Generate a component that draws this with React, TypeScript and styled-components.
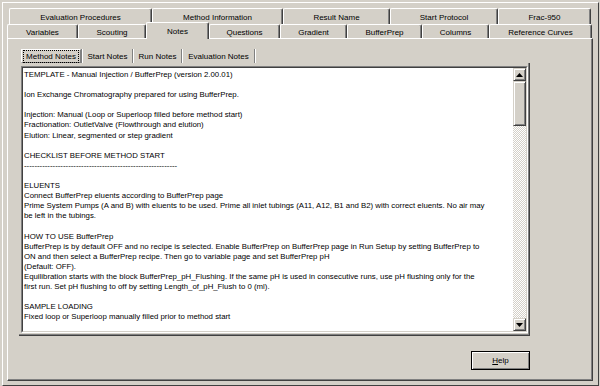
import React from "react";
import styled, { createGlobalStyle } from "styled-components";

const FACE = "#d4d0c8";
const LIGHT = "#ffffff";
const SHADOW = "#808080";
const DARK = "#404040";

const GlobalStyle = createGlobalStyle`
  html, body { margin: 0; padding: 0; background: ${FACE}; }
  body { font-family: "Liberation Sans", Arial, sans-serif; }
`;

const Window = styled.div`
  width: 600px;
  height: 386px;
  box-sizing: border-box;
  padding: 2px 1px 0 2px;
  background: ${FACE};
  display: flex;
  font-family: "Liberation Sans", Arial, sans-serif;
  font-size: 8px;
  color: #000;
`;

const Frame = styled.div`
  flex: 1;
  display: flex;
  flex-direction: column;
  border-top: 1px solid ${LIGHT};
  border-left: 1px solid ${LIGHT};
  border-right: 1px solid ${DARK};
  border-bottom: 1px solid ${DARK};
  padding: 5px 5px 4px 4px;
`;

const TabRow = styled.div<{ $indent: number; $overlap: number }>`
  display: flex;
  align-items: flex-end;
  height: 16px;
  margin-left: ${(p) => p.$indent}px;
  margin-top: ${(p) => -p.$overlap}px;
`;

const Tab = styled.div<{ $w: number; $h: number; $active?: boolean }>`
  box-sizing: border-box;
  width: ${(p) => p.$w}px;
  height: ${(p) => p.$h}px;
  background: ${FACE};
  border-top: 1px solid ${LIGHT};
  border-left: 1px solid ${LIGHT};
  border-right: 1px solid ${DARK};
  box-shadow: inset -1px 0 0 ${SHADOW};
  border-top-left-radius: 2px;
  border-top-right-radius: 2px;
  display: flex;
  align-items: center;
  justify-content: center;
  white-space: nowrap;
  position: relative;
  z-index: ${(p) => (p.$active ? 2 : 1)};
  margin-bottom: ${(p) => (p.$active ? -1 : 0)}px;
  padding-top: ${(p) => (p.$active ? 0 : 1)}px;
`;

const Panel = styled.div`
  flex: 1;
  display: flex;
  flex-direction: column;
  border-top: 1px solid ${LIGHT};
  border-left: 1px solid ${LIGHT};
  border-right: 1px solid ${DARK};
  border-bottom: 1px solid ${DARK};
  box-shadow: inset -1px -1px 0 ${SHADOW};
  padding: 10px 0 0 11px;
`;

const InnerTabs = styled.div`
  display: flex;
  height: 14px;
  margin-left: 2px;
`;

const InnerTab = styled.div<{ $w: number; $active?: boolean }>`
  box-sizing: border-box;
  width: ${(p) => p.$w}px;
  height: 14px;
  display: flex;
  align-items: center;
  justify-content: center;
  white-space: nowrap;
  border: 1px solid transparent;
  ${(p) =>
    p.$active
      ? `border-color: ${LIGHT} ${SHADOW} ${SHADOW} ${LIGHT};`
      : ""}
`;

const FocusRect = styled.span`
  outline: 1px dotted #000;
  outline-offset: 0;
  padding: 1px 2px;
  line-height: 9px;
`;

const Separator = styled.div`
  width: 0;
  height: 14px;
  border-left: 1px solid ${SHADOW};
  border-right: 1px solid ${LIGHT};
`;

const PageBox = styled.div`
  box-sizing: border-box;
  width: 511px;
  height: 273px;
  display: flex;
  border-right: 1px solid ${DARK};
  border-bottom: 1px solid ${DARK};
  box-shadow: inset -1px -1px 0 ${SHADOW};
  padding: 3px 1px 2px 2px;
`;

const EditOuter = styled.div`
  flex: 1;
  display: flex;
  border-top: 1px solid ${SHADOW};
  border-left: 1px solid ${SHADOW};
  border-right: 1px solid ${LIGHT};
  border-bottom: 1px solid ${LIGHT};
`;

const EditInner = styled.div`
  flex: 1;
  display: flex;
  background: #fff;
  border-top: 1px solid ${DARK};
  border-left: 1px solid ${DARK};
  border-right: 1px solid ${FACE};
  border-bottom: 1px solid ${FACE};
  overflow: hidden;
`;

const EditText = styled.div`
  flex: 1;
  padding: 2px 0 0 1px;
  white-space: pre;
  overflow: hidden;
  font-size: 7.8px;
  line-height: 10.1px;
`;

const ScrollBar = styled.div`
  width: 13px;
  display: flex;
  flex-direction: column;
`;

const ScrollButton = styled.div`
  box-sizing: border-box;
  height: 13px;
  background: ${FACE};
  border-top: 1px solid ${FACE};
  border-left: 1px solid ${FACE};
  border-right: 1px solid ${DARK};
  border-bottom: 1px solid ${DARK};
  box-shadow: inset 1px 1px 0 ${LIGHT}, inset -1px -1px 0 ${SHADOW};
  display: flex;
  align-items: center;
  justify-content: center;
`;

const Thumb = styled(ScrollButton)<{ $h: number }>`
  height: ${(p) => p.$h}px;
`;

const Track = styled.div`
  flex: 1;
  background-color: ${FACE};
  background-image: repeating-conic-gradient(${LIGHT} 0 25%, ${FACE} 0 50%);
  background-size: 2px 2px;
`;

const Footer = styled.div`
  width: 511px;
  display: flex;
  justify-content: flex-end;
  margin-top: 15px;
`;

const HelpButton = styled.div`
  box-sizing: border-box;
  width: 59px;
  height: 19px;
  border: 1px solid #000;
  box-shadow: inset 1px 1px 0 ${LIGHT}, inset -1px -1px 0 ${SHADOW};
  display: flex;
  align-items: center;
  justify-content: center;
  font-size: 8px;
`;

const Arrow = ({ up }: { up?: boolean }) => (
  <svg width="7" height="4" viewBox="0 0 7 4">
    <polygon points={up ? "3.5,0 7,4 0,4" : "0,0 7,0 3.5,4"} fill="#000" />
  </svg>
);

const backRow = [
  { label: "Evaluation Procedures", w: 143 },
  { label: "Method Information", w: 131 },
  { label: "Result Name", w: 107 },
  { label: "Start Protocol", w: 108 },
  { label: "Frac-950", w: 93 },
];

const frontRow = [
  { label: "Variables", w: 71 },
  { label: "Scouting", w: 68 },
  { label: "Notes", w: 63, active: true },
  { label: "Questions", w: 71 },
  { label: "Gradient", w: 67 },
  { label: "BufferPrep", w: 75 },
  { label: "Columns", w: 67 },
  { label: "Reference Curves", w: 103 },
];

const innerTabs = [
  { label: "Method Notes", w: 60, active: true },
  { label: "Start Notes", w: 49 },
  { label: "Run Notes", w: 47 },
  { label: "Evaluation Notes", w: 71 },
];

const noteLines = [
  "TEMPLATE - Manual Injection / BufferPrep (version 2.00.01)",
  "",
  "Ion Exchange Chromatography prepared for using BufferPrep.",
  "",
  "Injection: Manual (Loop or Superloop filled before method start)",
  "Fractionation: OutletValve (Flowthrough and elution)",
  "Elution: Linear, segmented or step gradient",
  "",
  "CHECKLIST BEFORE METHOD START",
  "-----------------------------------------------------------",
  "",
  "ELUENTS",
  "Connect BufferPrep eluents according to BufferPrep page",
  "Prime System Pumps (A and B) with eluents to be used. Prime all inlet tubings (A11, A12, B1 and B2) with correct eluents. No air may",
  "be left in the tubings.",
  "",
  "HOW TO USE BufferPrep",
  "BufferPrep is by default OFF and no recipe is selected. Enable BufferPrep on BufferPrep page in Run Setup by setting BufferPrep to",
  "ON and then select a BufferPrep recipe. Then go to variable page and set BufferPrep pH",
  "(Default: OFF).",
  "Equilibration starts with the block BufferPrep_pH_Flushing. If the same pH is used in consecutive runs, use pH flushing only for the",
  "first run. Set pH flushing to off by setting Length_of_pH_Flush to 0 (ml).",
  "",
  "SAMPLE LOADING",
  "Fixed loop or Superloop manually filled prior to method start",
];

export default function App() {
  return (
    <>
      <GlobalStyle />
      <Window>
        <Frame>
          <TabRow $indent={2} $overlap={0}>
            {backRow.map((t) => (
              <Tab key={t.label} $w={t.w} $h={16}>
                {t.label}
              </Tab>
            ))}
          </TabRow>
          <TabRow $indent={0} $overlap={2}>
            {frontRow.map((t) => (
              <Tab key={t.label} $w={t.w} $h={t.active ? 17 : 14} $active={t.active}>
                {t.label}
              </Tab>
            ))}
          </TabRow>
          <Panel>
            <InnerTabs>
              {innerTabs.map((t) => (
                <React.Fragment key={t.label}>
                  <InnerTab $w={t.w} $active={t.active}>
                    {t.active ? <FocusRect>{t.label}</FocusRect> : t.label}
                  </InnerTab>
                  <Separator />
                </React.Fragment>
              ))}
            </InnerTabs>
            <PageBox>
              <EditOuter>
                <EditInner>
                  <EditText>{noteLines.join("\n")}</EditText>
                  <ScrollBar>
                    <ScrollButton>
                      <Arrow up />
                    </ScrollButton>
                    <Thumb $h={45} />
                    <Track />
                    <ScrollButton>
                      <Arrow />
                    </ScrollButton>
                  </ScrollBar>
                </EditInner>
              </EditOuter>
            </PageBox>
            <Footer>
              <HelpButton>
                <span>
                  <u>H</u>elp
                </span>
              </HelpButton>
            </Footer>
          </Panel>
        </Frame>
      </Window>
    </>
  );
}
